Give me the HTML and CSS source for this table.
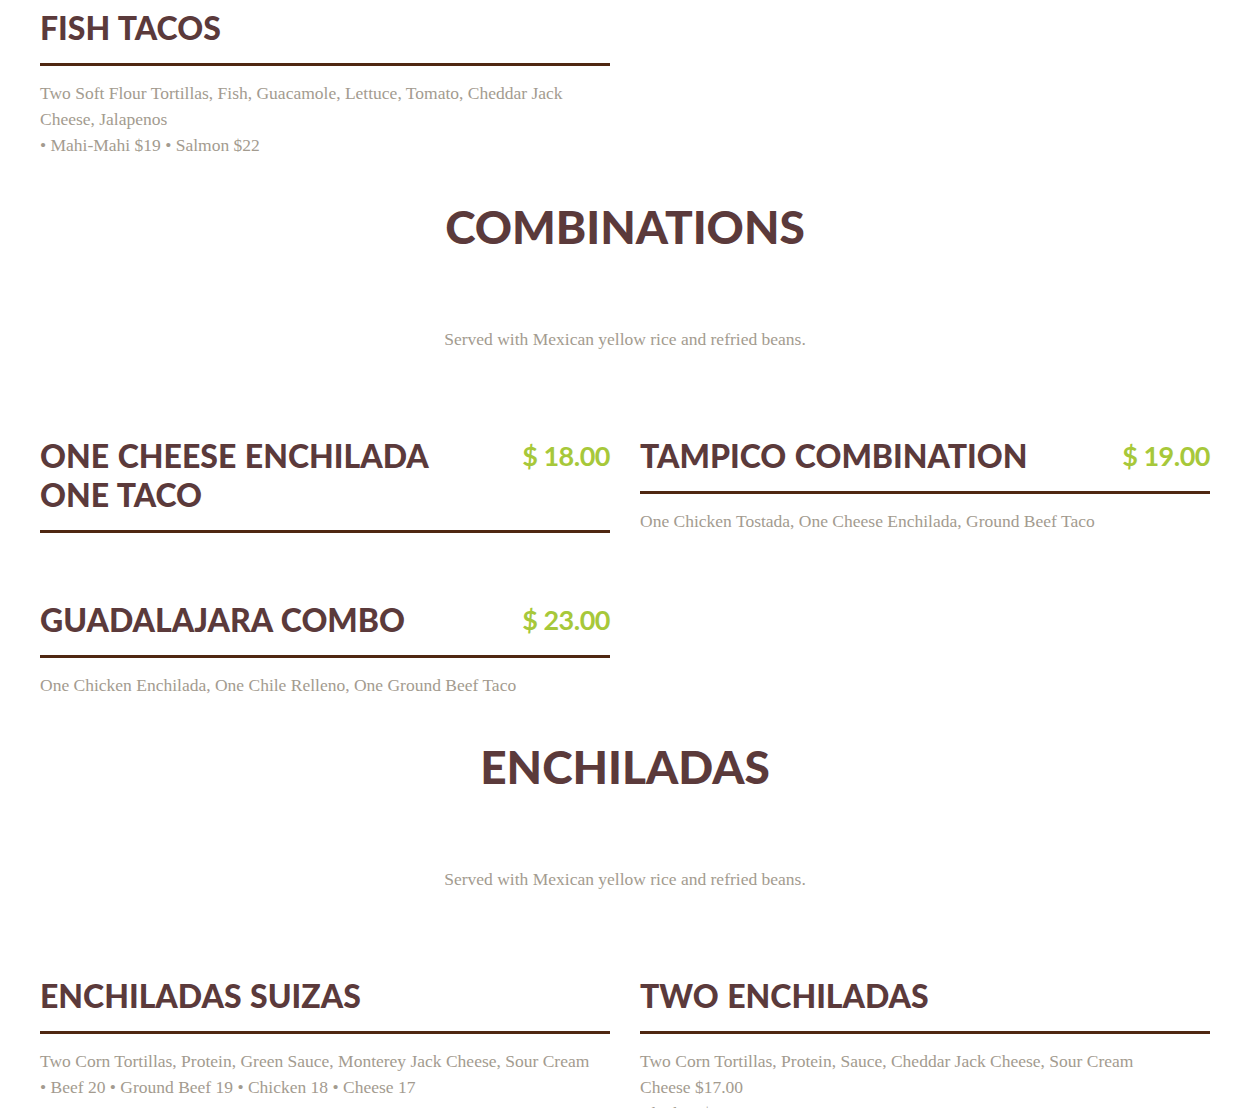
FILE: index.html
```html
<!DOCTYPE html>
<html lang="en">
<head>
<meta charset="utf-8">
<title>Menu</title>
<link rel="stylesheet" href="styles.css">
</head>
<body>
<main class="page">
  <div class="grid grid-first">
    <article class="item">
      <div class="item-head">
        <h3 class="item-title">Fish Tacos</h3>
      </div>
      <p class="item-desc">Two Soft Flour Tortillas, Fish, Guacamole, Lettuce, Tomato, Cheddar Jack Cheese, Jalapenos<br>• Mahi-Mahi $19 • Salmon $22</p>
    </article>
  </div>

  <section class="section">
    <h2 class="section-title">Combinations</h2>
    <p class="section-sub">Served with Mexican yellow rice and refried beans.</p>
    <div class="grid">
      <article class="item">
        <div class="item-head">
          <h3 class="item-title">One Cheese Enchilada<br>One Taco</h3>
          <span class="item-price">$ 18.00</span>
        </div>
      </article>
      <article class="item">
        <div class="item-head">
          <h3 class="item-title">Tampico Combination</h3>
          <span class="item-price">$ 19.00</span>
        </div>
        <p class="item-desc">One Chicken Tostada, One Cheese Enchilada, Ground Beef Taco</p>
      </article>
      <article class="item">
        <div class="item-head">
          <h3 class="item-title">Guadalajara Combo</h3>
          <span class="item-price">$ 23.00</span>
        </div>
        <p class="item-desc">One Chicken Enchilada, One Chile Relleno, One Ground Beef Taco</p>
      </article>
    </div>
  </section>

  <section class="section">
    <h2 class="section-title">Enchiladas</h2>
    <p class="section-sub">Served with Mexican yellow rice and refried beans.</p>
    <div class="grid">
      <article class="item">
        <div class="item-head">
          <h3 class="item-title">Enchiladas Suizas</h3>
        </div>
        <p class="item-desc">Two Corn Tortillas, Protein, Green Sauce, Monterey Jack Cheese, Sour Cream<br>• Beef 20 • Ground Beef 19 • Chicken 18 • Cheese 17</p>
      </article>
      <article class="item">
        <div class="item-head">
          <h3 class="item-title">Two Enchiladas</h3>
        </div>
        <p class="item-desc">Two Corn Tortillas, Protein, Sauce, Cheddar Jack Cheese, Sour Cream<br>Cheese $17.00<br>Chicken $18.00</p>
      </article>
    </div>
  </section>
</main>
</body>
</html>
```

FILE: styles.css
```css
html, body {
  margin: 0;
  padding: 0;
  background: #ffffff;
}

.page {
  width: 1170px;
  padding: 8px 40px 0;
}

.grid {
  display: grid;
  grid-template-columns: 570px 570px;
  column-gap: 30px;
  row-gap: 66px;
  align-items: start;
}

.section {
  margin-top: 40px;
}

.section-title {
  margin: 0;
  text-align: center;
  font-family: Lato, "Open Sans", sans-serif;
  font-weight: 900;
  font-size: 46px;
  line-height: 58px;
  text-transform: uppercase;
  color: #5b3a3b;
}

.section-sub {
  margin: 70px 0 0;
  text-align: center;
  font-family: "Liberation Serif", serif;
  font-size: 17.5px;
  line-height: 26px;
  color: #a39b8f;
}

.section .grid {
  margin-top: 84px;
}

.item-head {
  display: flex;
  justify-content: space-between;
  align-items: flex-start;
  gap: 20px;
  padding-bottom: 16px;
  border-bottom: 3px solid #4f2812;
}

.item-title {
  margin: 0;
  font-family: Lato, "Open Sans", sans-serif;
  font-weight: 900;
  font-size: 32px;
  line-height: 39px;
  word-spacing: 1px;
  text-transform: uppercase;
  color: #5b3a3b;
}

.item-price {
  font-family: Lato, "Open Sans", sans-serif;
  font-weight: 700;
  font-size: 27px;
  line-height: 39px;
  letter-spacing: -0.5px;
  color: #a7c83a;
  white-space: nowrap;
}

.item-desc {
  margin: 14px 0 0;
  font-family: "Liberation Serif", serif;
  font-size: 17.5px;
  line-height: 26px;
  color: #a39b8f;
}
```
